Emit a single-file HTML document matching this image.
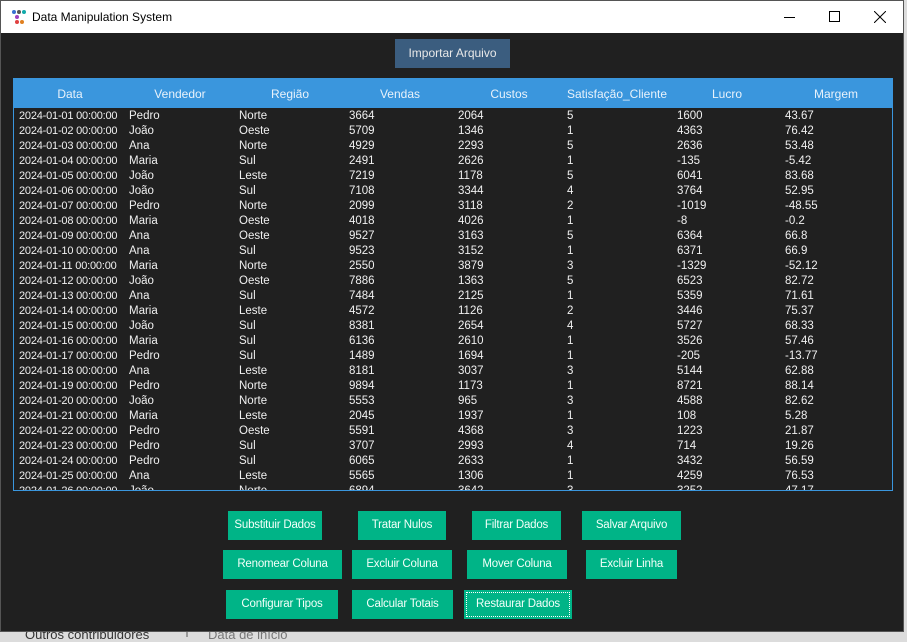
<!DOCTYPE html>
<html><head><meta charset="utf-8"><style>
*{margin:0;padding:0;box-sizing:border-box}
body{width:907px;height:637px;overflow:hidden;background:#dcdcdc;font-family:"Liberation Sans",sans-serif;position:relative}
.win{position:absolute;left:0;top:0;width:904px;height:632px;background:#202020;border:1px solid #555}
.title{position:absolute;left:0;top:0;width:902px;height:32px;background:#fff;color:#000;font-size:12px}
.title .t{position:absolute;left:31px;top:9px}
.imp{position:absolute;left:394px;top:38px;width:115px;height:29px;background:#3b5d7f;color:#e8e8e8;font-size:12px;text-align:center;line-height:29px}
.tbl{position:absolute;left:12px;top:77px;width:880px;height:413px;border:1px solid #3a96dd;overflow:hidden;background:#202020}
.hdr{height:29px;background:#3a96dd;color:#e8f2fb;font-size:12px;position:relative}
.hdr span{position:absolute;top:8px;width:110px;text-align:center}
#rows{margin-top:1px}
.row{height:15px;position:relative;color:#f0f0f0;font-size:11.5px;line-height:15px}
.row span{position:absolute;top:0;white-space:nowrap}
.row span.d{width:104px;overflow:hidden;font-size:11px;letter-spacing:-0.2px}
.btn{position:absolute;height:29px;background:#00b487;color:#f2fff9;font-size:11.5px;text-align:center;line-height:29px;letter-spacing:-0.2px}
.bg{position:absolute;top:628px;font-size:13px;color:#333}
</style></head><body>
<div class="bg" style="left:25px;top:627px">Outros contribuidores</div>
<div style="position:absolute;left:186px;top:632px;width:2px;height:5px;background:#999"></div>
<div class="bg" style="left:208px;top:627px;color:#777">Data de início</div>
<div class="win">
<div class="title">
<svg style="position:absolute;left:10px;top:8px" width="16" height="16"><circle cx="3" cy="3" r="2" fill="#3a6fd0"/><circle cx="8" cy="3" r="2" fill="#555"/><circle cx="13" cy="3" r="2" fill="#1aa"/><circle cx="6" cy="8" r="2" fill="#a040c0"/><circle cx="6" cy="13" r="2" fill="#e04040"/><circle cx="11" cy="13" r="2" fill="#e08020"/></svg>
<span class="t">Data Manipulation System</span>
<div style="position:absolute;left:783px;top:16px;width:11px;height:1px;background:#000"></div>
<div style="position:absolute;left:828px;top:10px;width:11px;height:11px;border:1px solid #000"></div>
<svg style="position:absolute;left:873px;top:10px" width="12" height="12"><path d="M0 0L12 12M12 0L0 12" stroke="#000" stroke-width="1"/></svg>
</div>
<div class="imp">Importar Arquivo</div>
<div class="tbl">
<div class="hdr"><span style="left:1px">Data</span><span style="left:111px">Vendedor</span><span style="left:221px">Região</span><span style="left:331px">Vendas</span><span style="left:440px">Custos</span><span style="left:548px">Satisfação_Cliente</span><span style="left:658px">Lucro</span><span style="left:767px">Margem</span></div>
<div id="rows"></div>
</div>
<div class="btn" style="left:227px;top:510px;width:94px">Substituir Dados</div>
<div class="btn" style="left:357px;top:510px;width:88px">Tratar Nulos</div>
<div class="btn" style="left:471px;top:510px;width:89px">Filtrar Dados</div>
<div class="btn" style="left:581px;top:510px;width:99px">Salvar Arquivo</div>
<div class="btn" style="left:222px;top:549px;width:119px">Renomear Coluna</div>
<div class="btn" style="left:351px;top:549px;width:100px">Excluir Coluna</div>
<div class="btn" style="left:466px;top:549px;width:100px">Mover Coluna</div>
<div class="btn" style="left:585px;top:549px;width:91px">Excluir Linha</div>
<div class="btn" style="left:225px;top:589px;width:112px">Configurar Tipos</div>
<div class="btn" style="left:351px;top:589px;width:101px">Calcular Totais</div>
<div class="btn" style="left:463px;top:589px;width:108px;outline:1px dotted #fff;outline-offset:-3px">Restaurar Dados</div>
</div>
<script>
var d=[["Pedro","Norte",3664,2064,5,1600,"43.67"],["João","Oeste",5709,1346,1,4363,"76.42"],["Ana","Norte",4929,2293,5,2636,"53.48"],["Maria","Sul",2491,2626,1,-135,"-5.42"],["João","Leste",7219,1178,5,6041,"83.68"],["João","Sul",7108,3344,4,3764,"52.95"],["Pedro","Norte",2099,3118,2,-1019,"-48.55"],["Maria","Oeste",4018,4026,1,-8,"-0.2"],["Ana","Oeste",9527,3163,5,6364,"66.8"],["Ana","Sul",9523,3152,1,6371,"66.9"],["Maria","Norte",2550,3879,3,-1329,"-52.12"],["João","Oeste",7886,1363,5,6523,"82.72"],["Ana","Sul",7484,2125,1,5359,"71.61"],["Maria","Leste",4572,1126,2,3446,"75.37"],["João","Sul",8381,2654,4,5727,"68.33"],["Maria","Sul",6136,2610,1,3526,"57.46"],["Pedro","Sul",1489,1694,1,-205,"-13.77"],["Ana","Leste",8181,3037,3,5144,"62.88"],["Pedro","Norte",9894,1173,1,8721,"88.14"],["João","Norte",5553,965,3,4588,"82.62"],["Maria","Leste",2045,1937,1,108,"5.28"],["Pedro","Oeste",5591,4368,3,1223,"21.87"],["Pedro","Sul",3707,2993,4,714,"19.26"],["Pedro","Sul",6065,2633,1,3432,"56.59"],["Ana","Leste",5565,1306,1,4259,"76.53"],["João","Norte",6894,3642,3,3252,"47.17"]];
var xs=[5,115,225,335,444,553,663,771],h="";
d.forEach(function(r,i){var day=("0"+(i+1)).slice(-2);var c=["2024-01-"+day+" 00:00:00"].concat(r);h+='<div class="row">';c.forEach(function(v,j){h+='<span'+(j==0?' class="d"':'')+' style="left:'+xs[j]+'px">'+v+'</span>'});h+='</div>'});
document.getElementById("rows").innerHTML=h;
</script>
</body></html>
